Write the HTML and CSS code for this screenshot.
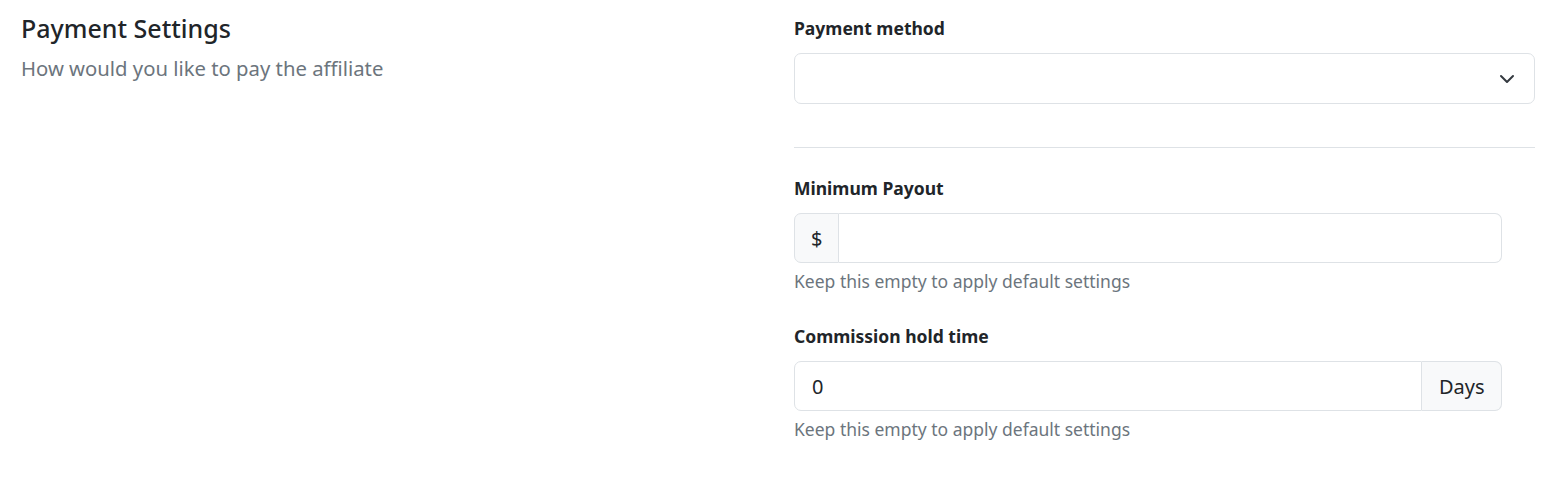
FILE: index.html
```html
<!DOCTYPE html>
<html lang="en">
<head>
<meta charset="utf-8">
<title>Payment Settings</title>
<link rel="stylesheet" href="styles.css">
</head>
<body>
<div class="page">
  <div class="intro">
    <h2 class="title">Payment Settings</h2>
    <p class="subtitle">How would you like to pay the affiliate</p>
  </div>
  <div class="form">
    <div class="field">
      <label class="label" for="method">Payment method</label>
      <div class="select">
        <span class="select-value" id="method"></span>
        <svg class="chevron" width="16" height="16" viewBox="0 0 16 16" fill="none" stroke="#343a40" stroke-width="2" stroke-linecap="round" stroke-linejoin="round"><path d="M2 5l6 6 6-6"/></svg>
      </div>
    </div>
    <hr class="divider">
    <div class="field narrow">
      <label class="label" for="payout">Minimum Payout</label>
      <div class="input-group">
        <span class="addon addon-start">$</span>
        <input class="input" id="payout" type="text" value="">
      </div>
      <div class="help">Keep this empty to apply default settings</div>
    </div>
    <div class="field narrow">
      <label class="label" for="hold">Commission hold time</label>
      <div class="input-group">
        <input class="input input-start" id="hold" type="text" value="0">
        <span class="addon addon-end">Days</span>
      </div>
      <div class="help">Keep this empty to apply default settings</div>
    </div>
  </div>
</div>
</body>
</html>
```
FILE: styles.css
```css
* { box-sizing: border-box; }
html, body { margin: 0; padding: 0; background: #fff; }
body {
  font-family: "Noto Sans", "Open Sans", "Liberation Sans", sans-serif;
  color: #212529;
}
.page {
  display: grid;
  grid-template-columns: 749px 741px;
  column-gap: 24px;
  padding: 10px 26px 0 21px;
}
.title {
  margin: 0;
  font-size: 25px;
  font-weight: 500;
  line-height: 36px;
  color: #212529;
}
.subtitle {
  margin: 6px 0 0;
  font-size: 20.3px;
  line-height: 32px;
  color: #6c757d;
}
.form {
  display: flex;
  flex-direction: column;
  padding-top: 5px;
}
.field { display: flex; flex-direction: column; }
.field.narrow { width: 708px; margin-bottom: 30px; }
.label {
  font-size: 17.5px;
  font-weight: 700;
  line-height: 26px;
  margin-bottom: 12px;
  color: #212529;
}
.select {
  height: 51px;
  border: 1px solid #dee2e6;
  border-radius: 7px;
  display: flex;
  align-items: center;
  justify-content: flex-end;
  padding: 0 19px 0 16px;
}
.chevron { display: block; }
.divider {
  border: 0;
  border-top: 1px solid #dee2e6;
  margin: 43px 0 27px;
  width: 100%;
}
.input-group {
  display: flex;
  height: 50px;
}
.addon {
  display: flex;
  align-items: center;
  background: #f8f9fa;
  border: 1px solid #dee2e6;
  font-size: 20px;
  color: #212529;
  padding: 0 16px;
}
.addon-start {
  border-radius: 7px 0 0 7px;
  width: 45px;
}
.addon-end {
  border-radius: 0 7px 7px 0;
  border-left: 0;
  width: 80px;
  padding: 0 0 0 17px;
}
.input {
  flex: 1;
  min-width: 0;
  height: 100%;
  border: 1px solid #dee2e6;
  border-left: 0;
  border-radius: 0 7px 7px 0;
  font-family: inherit;
  font-size: 20px;
  color: #212529;
  padding: 0 16px;
  outline: none;
  background: #fff;
}
.input.input-start {
  border-left: 1px solid #dee2e6;
  border-radius: 7px 0 0 7px;
  padding-left: 17px;
}
.help {
  margin-top: 6px;
  font-size: 17.5px;
  line-height: 24px;
  color: #6c757d;
}
```
